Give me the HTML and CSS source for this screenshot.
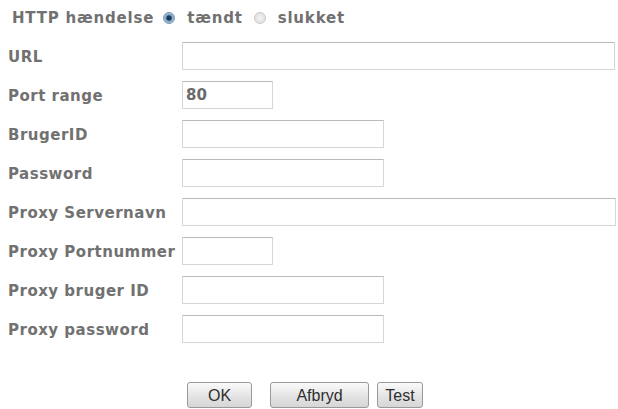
FILE: index.html
```html
<!DOCTYPE html>
<html lang="da">
<head>
<meta charset="utf-8">
<title>HTTP hændelse</title>
<link rel="stylesheet" href="styles.css">
</head>
<body>
<div class="page">
  <div class="event">
    <span class="event-title">HTTP hændelse</span>
    <label class="opt"><input type="radio" name="http" class="radio" checked><span>tændt</span></label>
    <label class="opt"><input type="radio" name="http" class="radio"><span>slukket</span></label>
  </div>
  <div class="form">
    <label class="lbl">URL</label><input class="field w-full" type="text">
    <label class="lbl">Port range</label><input class="field w-short" type="text" value="80">
    <label class="lbl">BrugerID</label><input class="field w-mid" type="text">
    <label class="lbl">Password</label><input class="field w-mid" type="password">
    <label class="lbl">Proxy Servernavn</label><input class="field w-full2" type="text">
    <label class="lbl">Proxy Portnummer</label><input class="field w-short" type="text">
    <label class="lbl">Proxy bruger ID</label><input class="field w-mid" type="text">
    <label class="lbl">Proxy password</label><input class="field w-mid" type="password">
  </div>
  <div class="actions">
    <button class="btn btn-ok">OK</button>
    <button class="btn btn-cancel">Afbryd</button>
    <button class="btn btn-test">Test</button>
  </div>
</div>
</body>
</html>
```
FILE: styles.css
```css
html, body {
  margin: 0;
  padding: 0;
  background: #ffffff;
}
.page {
  padding: 8px 2px 0 8px;
  font-family: "DejaVu Sans", Verdana, sans-serif;
  font-weight: bold;
  font-size: 15px;
  letter-spacing: 0.5px;
  color: #717171;
}
.event {
  display: flex;
  align-items: center;
  height: 20px;
  padding-left: 4px;
  letter-spacing: 0.8px;
}
.event-title {
  margin-right: 9px;
}
.opt {
  display: flex;
  align-items: center;
  margin-right: 11px;
}
.opt span {
  margin-left: 12px;
}
.radio {
  -webkit-appearance: none;
  appearance: none;
  margin: 0;
  width: 12px;
  height: 12px;
  border-radius: 50%;
  border: 1px solid #c8c8c8;
  background: radial-gradient(circle, #f2f2f2 0, #dcdcdc 100%);
  box-sizing: border-box;
}
.radio:checked {
  border-color: #7d98b3;
  background: radial-gradient(circle, #1b3a5c 0, #1b3a5c 30%, #7fa3c6 45%, #c9dbec 100%);
}
.form {
  margin-top: 14px;
  display: grid;
  grid-template-columns: 174px 1fr;
  grid-auto-rows: 28px;
  row-gap: 11px;
  align-items: center;
}
.lbl {
  align-self: center;
  padding-top: 1px;
}
.field {
  height: 28px;
  box-sizing: border-box;
  border: 1px solid #d6d6d6;
  border-top-color: #bababa;
  border-radius: 1px;
  padding: 0 3px;
  font-family: "DejaVu Sans", Verdana, sans-serif;
  font-weight: bold;
  font-size: 15px;
  letter-spacing: 0;
  color: #6a6a6a;
  background: #ffffff;
  outline: none;
}
.w-full { width: 433px; }
.w-full2 { width: 434px; }
.w-short { width: 91px; }
.w-mid { width: 202px; }
.actions {
  margin-top: 39px;
  margin-left: 179px;
  display: flex;
  align-items: center;
}
.btn {
  height: 26px;
  box-sizing: border-box;
  border: 1px solid #9a9a9a;
  border-radius: 3px;
  background: linear-gradient(#fafafa, #e4e4e4 55%, #d6d6d6);
  font-family: "Liberation Sans", Arial, sans-serif;
  font-size: 16px;
  font-weight: normal;
  letter-spacing: 0;
  color: #2e2e2e;
  padding: 2px 0 0;
}
.btn-ok { width: 65px; }
.btn-cancel { width: 99px; margin-left: 18px; }
.btn-test { width: 46px; margin-left: 8px; }
```
